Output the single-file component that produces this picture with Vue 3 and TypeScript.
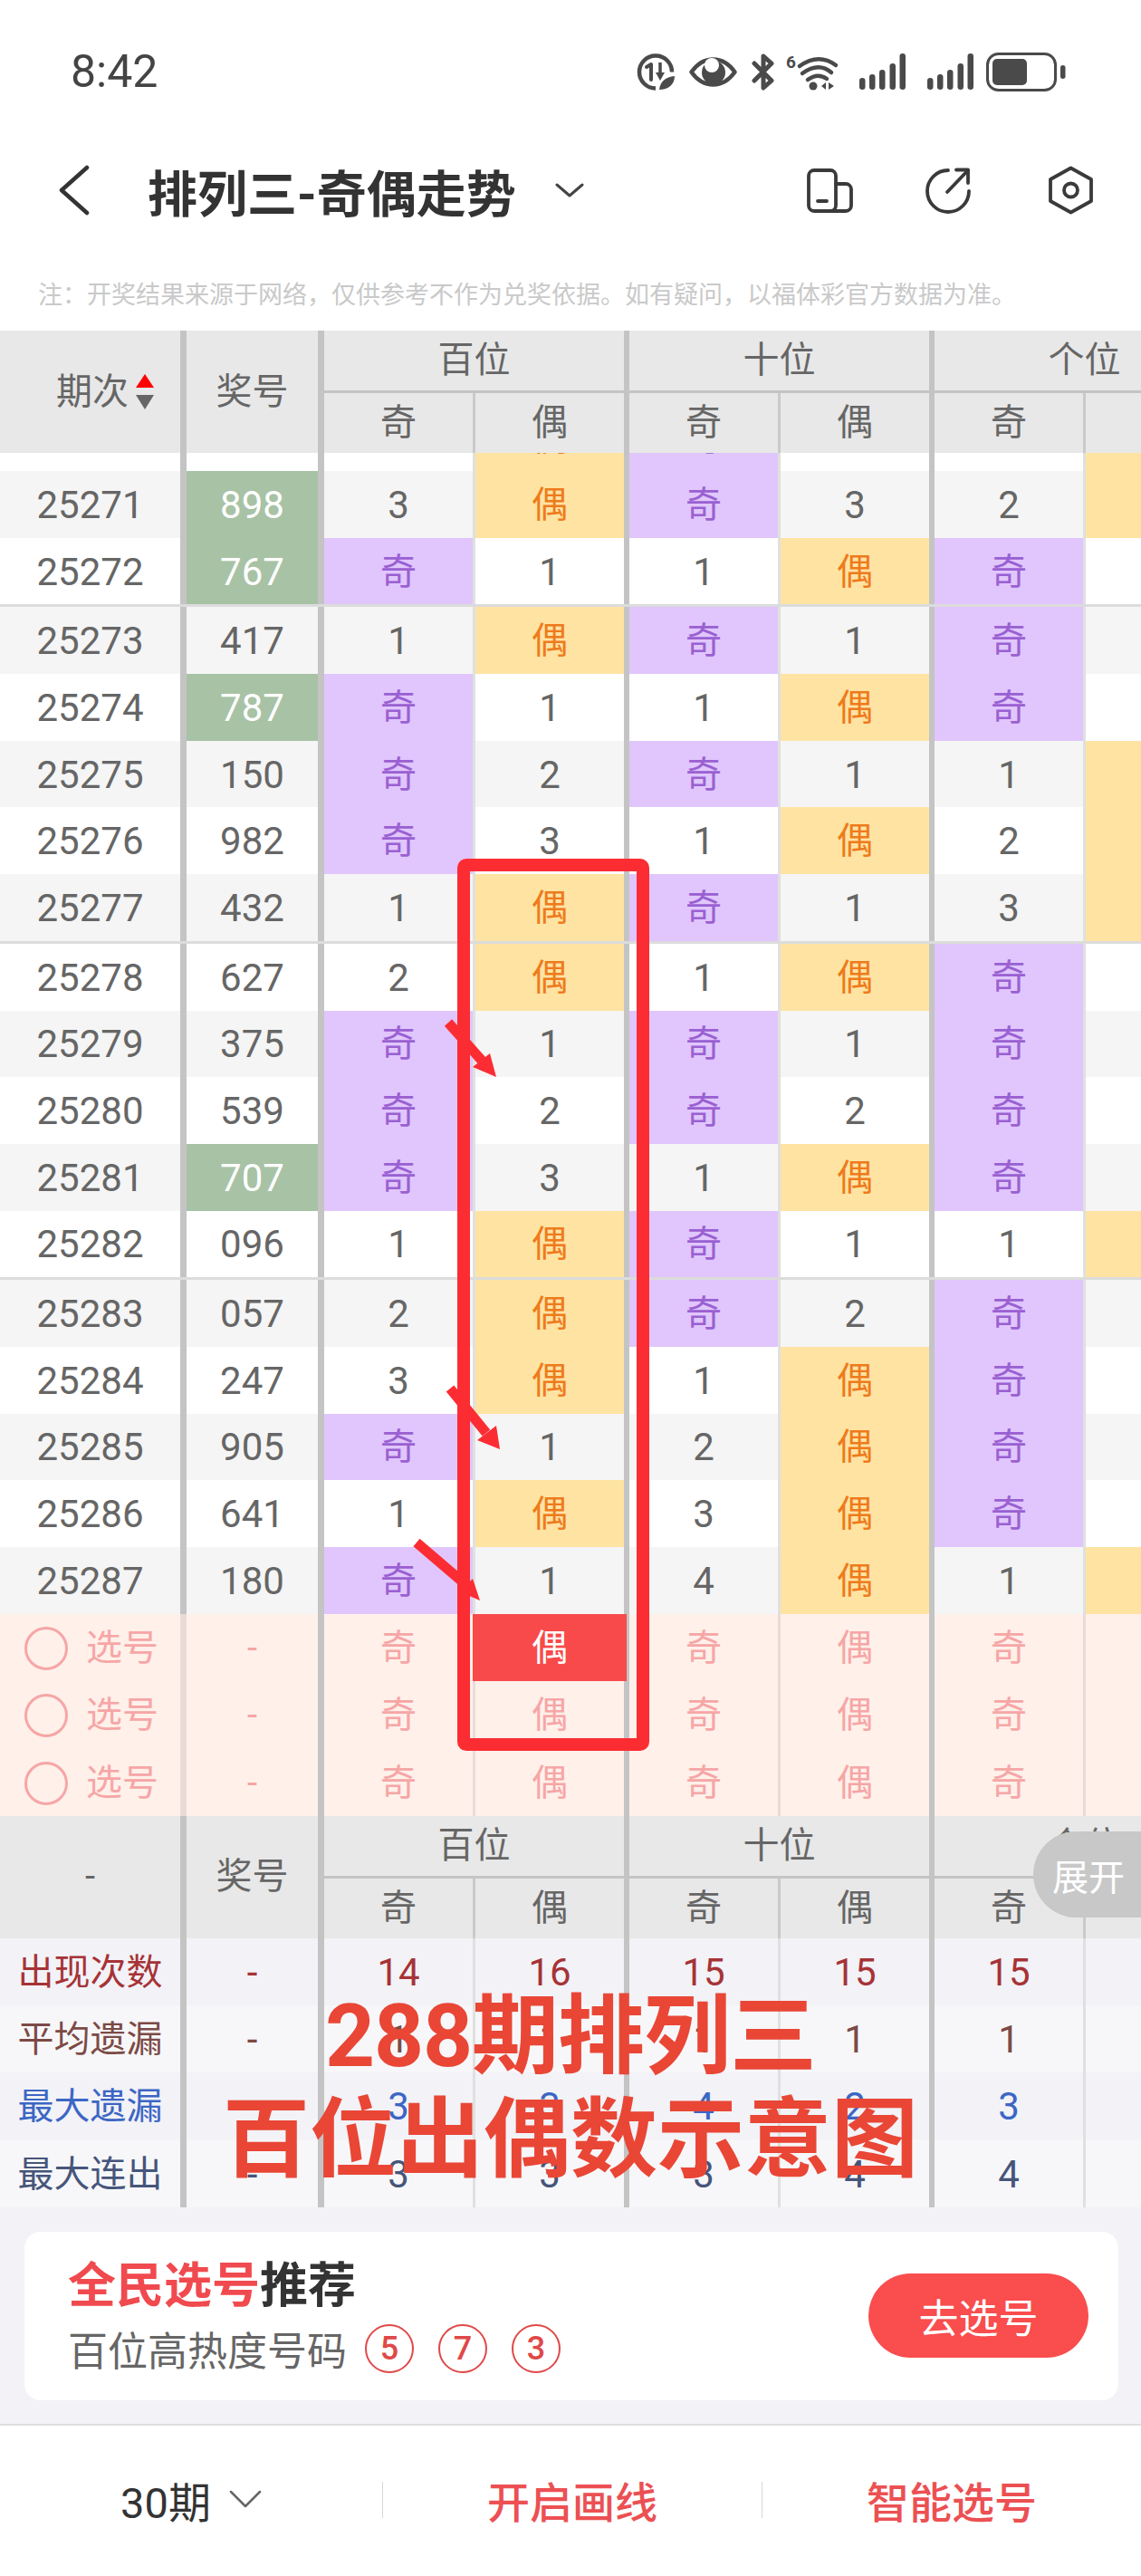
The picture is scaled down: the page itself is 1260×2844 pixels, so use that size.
<template>
  <div class="page">
    <!-- status bar -->
    <div class="status-bar">
      <span class="clock">8:42</span>
      <div class="status-icons">
        <svg width="42" height="41" viewBox="0 0 42 41" fill="none" stroke="#4a4a4a" stroke-width="4.5">
          <path d="M21 38.5A18 18 0 1 1 39 20.5" />
          <path d="M11 15l5-3v17" stroke-width="4" stroke-linecap="round" stroke-linejoin="round" />
          <path d="M26 10v14" stroke-width="3.5" />
          <path d="M21 21h10l-5 9z" fill="#4a4a4a" stroke="none" />
          <path d="M25 40c1-9 7-14 17-15 0 9-7 15-17 15z" fill="#4a4a4a" stroke="none" />
        </svg>
        <svg width="53" height="33" viewBox="0 0 53 33" fill="none">
          <path d="M2.500 16.500C10 6 18 2.500 26.500 2.500S43 6 50.500 16.500C43 27 35 30.500 26.500 30.500S10 27 2.500 16.500z" stroke="#4a4a4a" stroke-width="4.500" stroke-linejoin="round" />
          <circle cx="27" cy="17" r="13" fill="#4a4a4a" />
          <circle cx="25" cy="9" r="8" fill="#fff" />
        </svg>
        <svg width="26" height="41" viewBox="0 0 26 41" fill="none" stroke="#4a4a4a" stroke-width="5" stroke-linecap="round" stroke-linejoin="round">
          <path d="M3 11l19 19-9 8V3l9 8L3 30" />
        </svg>
        <svg class="wifi" width="57" height="41" viewBox="0 0 57 41" fill="none" stroke="#4a4a4a" stroke-linecap="round">
          <text class="wifi-six" x="0" y="16" fill="#4a4a4a" stroke="none">6</text>
          <path d="M15 14Q36 -1 55 13" stroke-width="4.500" />
          <path d="M18 22Q36 9 50 21" stroke-width="4.500" />
          <path d="M24 29Q35 21 45 28" stroke-width="4.500" />
          <circle cx="30" cy="36" r="4.500" fill="#4a4a4a" stroke="none" />
          <path d="M39 36l5-4v8zM47 32v8l6-4z" fill="#4a4a4a" stroke="none" />
        </svg>
        <svg v-for="n in 2" :key="n" class="signal" width="51" height="41" viewBox="0 0 51 41">
          <rect v-for="bar in signalBars" :key="bar.x" :x="bar.x" :y="bar.y" width="6.500" :height="40 - bar.y" rx="3.200" fill="#4a4a4a" />
        </svg>
        <svg class="battery" width="89" height="43" viewBox="0 0 89 43" fill="none">
          <rect x="1.500" y="1.500" width="75" height="40" rx="12" stroke="#4a4a4a" stroke-width="3" />
          <rect x="7" y="7" width="38" height="29" rx="5" fill="#4a4a4a" />
          <rect x="82" y="14" width="5.500" height="15" rx="2.700" fill="#4a4a4a" />
        </svg>
      </div>
    </div>

    <!-- nav -->
    <div class="nav">
      <svg class="back" width="34" height="56" viewBox="0 0 34 56" fill="none" stroke="#333" stroke-width="4.500" stroke-linecap="round" stroke-linejoin="round">
        <path d="M31 3L3 28l28 25" />
      </svg>
      <h1 class="title">排列三-奇偶走势</h1>
      <svg class="title-arrow" width="32" height="16" viewBox="0 0 32 16" fill="none" stroke="#444" stroke-width="3" stroke-linecap="round" stroke-linejoin="round">
        <path d="M2 2l14 12L30 2" />
      </svg>
      <div class="nav-actions">
        <svg width="51" height="49" viewBox="0 0 51 49" fill="none" stroke="#3a3a3a" stroke-width="3.800" stroke-linecap="round">
          <rect x="2" y="2" width="30" height="45" rx="6" />
          <path d="M32 17h11a6 6 0 0 1 6 6v18a6 6 0 0 1-6 6H26" />
          <path d="M12 36h10" />
        </svg>
        <svg width="51" height="51" viewBox="0 0 51 51" fill="none" stroke="#3a3a3a" stroke-width="3.800" stroke-linecap="round" stroke-linejoin="round">
          <path d="M26 3A23 23 0 1 0 49 26" />
          <path d="M25 27L48 3" />
          <path d="M35 2.500h13V17" />
        </svg>
        <svg class="hex" width="49" height="54" viewBox="0 0 49 54" fill="none" stroke="#3a3a3a" stroke-width="3.800" stroke-linejoin="round">
          <path d="M24.500 2.500L47 15v24L24.500 51.500 2 39V15z" />
          <circle cx="24.500" cy="27" r="7.500" />
        </svg>
      </div>
    </div>

    <p class="note">注：开奖结果来源于网络，仅供参考不作为兑奖依据。如有疑问，以福体彩官方数据为准。</p>

    <!-- table head -->
    <div class="head">
      <div class="head-main head-period">
        <span>期次</span>
        <span class="sort">
          <i class="sort-up"></i>
          <i class="sort-down"></i>
        </span>
      </div>
      <div class="head-main">奖号</div>
      <template v-for="group in groups" :key="group">
        <div class="head-group">{{ group }}</div>
        <div class="head-sub thin">奇</div>
        <div class="head-sub">偶</div>
      </template>
    </div>

    <!-- scrolled rows -->
    <div class="rows">
      <div
        v-for="(row, index) in rows"
        :key="row.period"
        class="row"
        :class="{ stripe: index % 2 === 1, split: splitAt.includes(row.period) }"
      >
        <div class="cell period">{{ row.period }}</div>
        <div class="cell prize" :class="{ hot: row.hot }">{{ row.prize }}</div>
        <div v-for="(val, i) in row.cells" :key="i" class="cell" :class="cellClass(val)">{{ val }}</div>
      </div>
    </div>

    <!-- pick rows -->
    <div v-for="n in 3" :key="n" class="row pick">
      <div class="cell period pick-label">
        <i class="pick-circle"></i>
        <span>选号</span>
      </div>
      <div class="cell prize">-</div>
      <div v-for="(val, i) in pickCells" :key="i" class="cell" :class="{ picked: n === 1 && i === 1 }">
        <span>{{ val }}</span>
      </div>
    </div>

    <!-- foot head -->
    <div class="head">
      <div class="head-main">-</div>
      <div class="head-main">奖号</div>
      <template v-for="group in groups" :key="group">
        <div class="head-group">{{ group }}</div>
        <div class="head-sub thin">奇</div>
        <div class="head-sub">偶</div>
      </template>
    </div>

    <div
      v-for="(stat, index) in stats"
      :key="stat.label"
      class="row stat"
      :class="{ light: index % 2 === 1 }"
      :style="{ color: stat.color }"
    >
      <div class="cell period">{{ stat.label }}</div>
      <div class="cell prize">-</div>
      <div v-for="(val, i) in stat.values" :key="i" class="cell">{{ val }}</div>
    </div>

    <!-- recommend -->
    <div class="recommend">
      <div class="card">
        <div class="card-text">
          <div class="card-title"><em>全民选号</em>推荐</div>
          <div class="card-sub">
            <span>百位高热度号码</span>
            <b v-for="num in hotNumbers" :key="num">{{ num }}</b>
          </div>
        </div>
        <div class="card-btn">去选号</div>
      </div>
    </div>

    <!-- bottom bar -->
    <div class="bottom">
      <div class="bottom-item period-pick">
        <span>30期</span>
        <svg width="36" height="20" viewBox="0 0 36 20" fill="none" stroke="#666" stroke-width="2.500" stroke-linecap="round" stroke-linejoin="round">
          <path d="M2 2l16 16L34 2" />
        </svg>
      </div>
      <i class="bottom-line"></i>
      <div class="bottom-item action">开启画线</div>
      <i class="bottom-line"></i>
      <div class="bottom-item action">智能选号</div>
    </div>

    <!-- floating toggle -->
    <div class="toggle">展开</div>

    <!-- red annotations drawn on the screenshot -->
    <svg class="marks" width="1260" height="2844" viewBox="0 0 1260 2844" fill="none">
      <rect x="512" y="955" width="198" height="971" rx="3" stroke="#fb2d33" stroke-width="14" />
      <g v-for="arrow in arrows" :key="arrow.head">
        <path :d="arrow.shaft" stroke="#fb2d33" stroke-width="11" />
        <polygon :points="arrow.head" fill="#fb2d33" />
      </g>
    </svg>
    <div class="caption">
      <div class="caption-top">288期排列三</div>
      <div>百位出偶数示意图</div>
    </div>
  </div>
</template>

<script setup lang="ts">
interface TrendRow {
  period: string;
  prize: string;
  hot: boolean;
  cells: string[];
}

const groups = ['百位', '十位', '个位'];

const signalBars = [
  { x: 0, y: 27 },
  { x: 11, y: 23 },
  { x: 22, y: 18 },
  { x: 33.5, y: 11 },
  { x: 44.5, y: 0 },
];

// period, prize, green mark, cells
const source: [string, string, boolean, string][] = [
  ['25270', '498', false, '2 偶 奇 2 1 偶'],
  ['25271', '898', true, '3 偶 奇 3 2 偶'],
  ['25272', '767', true, '奇 1 1 偶 奇 1'],
  ['25273', '417', false, '1 偶 奇 1 奇 2'],
  ['25274', '787', true, '奇 1 1 偶 奇 3'],
  ['25275', '150', false, '奇 2 奇 1 1 偶'],
  ['25276', '982', false, '奇 3 1 偶 2 偶'],
  ['25277', '432', false, '1 偶 奇 1 3 偶'],
  ['25278', '627', false, '2 偶 1 偶 奇 1'],
  ['25279', '375', false, '奇 1 奇 1 奇 2'],
  ['25280', '539', false, '奇 2 奇 2 奇 3'],
  ['25281', '707', true, '奇 3 1 偶 奇 4'],
  ['25282', '096', false, '1 偶 奇 1 1 偶'],
  ['25283', '057', false, '2 偶 奇 2 奇 1'],
  ['25284', '247', false, '3 偶 1 偶 奇 2'],
  ['25285', '905', false, '奇 1 2 偶 奇 3'],
  ['25286', '641', false, '1 偶 3 偶 奇 4'],
  ['25287', '180', false, '奇 1 4 偶 1 偶'],
];

const rows: TrendRow[] = source.map(([period, prize, hot, cells]) => ({
  period,
  prize,
  hot,
  cells: cells.split(' '),
}));

const splitAt = ['25273', '25278', '25283'];

const pickCells = ['奇', '偶', '奇', '偶', '奇', '偶'];

const stats = [
  { label: '出现次数', color: '#a63336', values: ['14', '16', '15', '15', '15', '15'] },
  { label: '平均遗漏', color: '#7c4a46', values: ['1', '1', '1', '1', '1', '1'] },
  { label: '最大遗漏', color: '#3c66c4', values: ['3', '3', '4', '2', '3', '2'] },
  { label: '最大连出', color: '#46557a', values: ['3', '3', '3', '4', '4', '3'] },
];

const hotNumbers = [5, 7, 3];

const arrows = [
  { shaft: 'M495 1129L533 1172', head: '548,1189 541,1163 522,1178' },
  { shaft: 'M497 1533L537 1582', head: '552,1600 548,1574 527,1590' },
  { shaft: 'M460 1703L515 1750', head: '530,1767 522,1743 507,1757' },
];

function cellClass(val: string): string {
  if (val === '奇') return 'odd';
  if (val === '偶') return 'even';
  return '';
}
</script>

<style scoped>
.page {
  position: relative;
  width: 1260px;
  height: 2844px;
  overflow: hidden;
  background: #fff;
  font-family: Roboto, "Noto Sans CJK SC", sans-serif;
  color: #666;
}

/* status bar */
.status-bar {
  height: 158px;
  display: flex;
  align-items: center;
  justify-content: space-between;
  padding: 0 82px 0 78px;
  box-sizing: border-box;
}

.clock {
  font-size: 50px;
  color: #444;
}

.status-icons {
  display: flex;
  align-items: center;
  gap: 16px;
}

.status-icons .wifi {
  margin-left: -4px;
}

.status-icons .signal {
  margin-left: 8px;
}

.status-icons .battery {
  margin-left: -2px;
}

.wifi-six {
  font-family: Roboto, sans-serif;
  font-size: 19px;
  font-weight: 700;
}

/* nav */
.nav {
  height: 104px;
  display: flex;
  align-items: center;
  padding: 0 53px 0 65px;
}

.title {
  margin: 0 0 0 64px;
  font-size: 55px;
  font-weight: 700;
  color: #333;
}

.title-arrow {
  margin-left: 43px;
}

.nav-actions {
  margin-left: auto;
  display: flex;
  align-items: center;
  gap: 79px;
}

.nav-actions .hex {
  margin-left: 7px;
}

.note {
  margin: 0;
  height: 103px;
  padding: 48px 0 0 42px;
  box-sizing: border-box;
  font-size: 27px;
  line-height: 32px;
  color: #c9c9c9;
}

/* table head */
.head {
  display: grid;
  grid-template-columns: 206px 152px repeat(3, 167px 170px);
  grid-template-rows: 69px 66px;
  background: #e8e8e8;
  font-size: 40px;
  line-height: 1;
}

.head-main {
  grid-row: 1 / 3;
  display: flex;
  align-items: center;
  justify-content: center;
  border-right: 7px solid #c4c4c4;
}

.head-period {
  justify-content: flex-start;
  padding-left: 62px;
  gap: 8px;
}

.head-group {
  grid-column: span 2;
  grid-row: 1;
  display: flex;
  align-items: center;
  justify-content: center;
  border-right: 6px solid #c4c4c4;
  border-bottom: 3px solid #c4c4c4;
}

.head-sub {
  grid-row: 2;
  display: flex;
  align-items: center;
  justify-content: center;
  border-right: 6px solid #c4c4c4;
}

.head-sub.thin {
  border-right: 3px solid #cacaca;
}

.sort {
  display: flex;
  flex-direction: column;
  gap: 8px;
}

.sort-up,
.sort-down {
  display: block;
  width: 0;
  height: 0;
  border-left: 10px solid transparent;
  border-right: 10px solid transparent;
}

.sort-up {
  border-bottom: 15px solid #f00;
}

.sort-down {
  border-top: 16px solid #666;
}

/* rows */
.rows {
  overflow: hidden;
}

.rows .row:first-child {
  margin-top: -53.7px;
}

.row {
  display: grid;
  grid-template-columns: 206px 152px repeat(3, 167px 170px);
  box-sizing: border-box;
  height: 73.7px;
  font-size: 42px;
  line-height: 1;
  background: #fff;
}

.row.stripe {
  background: #f5f5f5;
}

.row.split {
  height: 76.7px;
  border-top: 3px solid #dcdcdc;
}

.cell {
  display: flex;
  align-items: center;
  justify-content: center;
  padding-top: 2px;
  border-right: 6px solid #c4c4c4;
}

.cell:nth-child(odd) {
  border-right: 3px solid #e0e0e0;
}

.cell.period,
.cell.prize {
  border-right: 7px solid #c4c4c4;
}

.cell.hot {
  background: #a8c2a5;
  color: #fff;
}

.cell.odd {
  background: #e0c6fc;
  color: #9a60d2;
  font-size: 40px;
}

.cell.even {
  background: #fee3a3;
  color: #ee7b1c;
  font-size: 40px;
}

/* pick rows */
.row.pick {
  height: 74.33px;
  background: #fff0ea;
  color: #f6a6a6;
  font-size: 40px;
}

.row.pick .cell:nth-child(odd) {
  border-right-color: #e9dcd7;
}

.pick-label {
  justify-content: flex-start;
  padding-left: 27px;
  gap: 20px;
}

.pick-circle {
  width: 48px;
  height: 48px;
  box-sizing: border-box;
  border: 3px solid #f6a6a6;
  border-radius: 50%;
}

.cell.picked {
  position: relative;
  z-index: 0;
  color: #fff;
}

.cell.picked::before {
  content: "";
  position: absolute;
  z-index: -1;
  top: 0;
  bottom: 0;
  left: -3px;
  right: -3px;
  background: #f84a4a;
}

/* stats */
.row.stat {
  height: 74.25px;
  background: #f2f2f7;
}

.row.stat.light {
  background: #f7f7f9;
}

.row.stat .period {
  font-size: 40px;
}

/* recommend */
.recommend {
  height: 241px;
  box-sizing: border-box;
  padding: 27px 25px 26px 27px;
  background: #f2f2f7;
  border-bottom: 2px solid #dedede;
}

.card {
  height: 186px;
  display: flex;
  align-items: center;
  justify-content: space-between;
  padding: 0 33px 0 48px;
  background: #fff;
  border-radius: 18px;
}

.card-text {
  margin-top: 5px;
}

.card-title {
  font-size: 53px;
  line-height: 60px;
  font-weight: 700;
  color: #333;
}

.card-title em {
  font-style: normal;
  color: #f04a4f;
}

.card-sub {
  margin-top: 7px;
  display: flex;
  align-items: center;
  font-size: 44px;
}

.card-sub b {
  width: 54px;
  height: 54px;
  box-sizing: border-box;
  margin-left: 27px;
  display: flex;
  align-items: center;
  justify-content: center;
  border: 2px solid #e04848;
  border-radius: 50%;
  font-size: 36px;
  font-weight: 500;
  color: #e04848;
}

.card-sub span + b {
  margin-left: 20px;
}

.card-btn {
  width: 243px;
  height: 93px;
  display: flex;
  align-items: center;
  justify-content: center;
  border-radius: 47px;
  background: #f94d4e;
  color: #fff;
  font-size: 44px;
}

/* bottom bar */
.bottom {
  height: 165px;
  display: grid;
  grid-template-columns: 422px 1px 418px 1px 1fr;
  align-items: center;
  font-size: 47px;
}

.bottom-item {
  display: flex;
  align-items: center;
  justify-content: center;
  padding-bottom: 2px;
}

.period-pick {
  gap: 20px;
  color: #333;
}

.action {
  font-weight: 500;
  color: #ec5053;
}

.bottom-line {
  height: 40px;
  background: #d8d8d8;
}

/* overlays */
.toggle {
  position: absolute;
  top: 2022px;
  right: 0;
  width: 119px;
  height: 95px;
  padding-left: 21px;
  box-sizing: border-box;
  display: flex;
  align-items: center;
  border-radius: 48px 0 0 48px;
  background: #c8c8c8;
  color: #fff;
  font-size: 40px;
}

.marks {
  position: absolute;
  top: 0;
  left: 0;
}

.caption {
  position: absolute;
  top: 2191px;
  left: 0;
  width: 1260px;
  text-align: center;
  font-size: 96px;
  line-height: 114px;
  font-weight: 700;
  color: #e94636;
}

.caption-top {
  letter-spacing: -1px;
}
</style>
